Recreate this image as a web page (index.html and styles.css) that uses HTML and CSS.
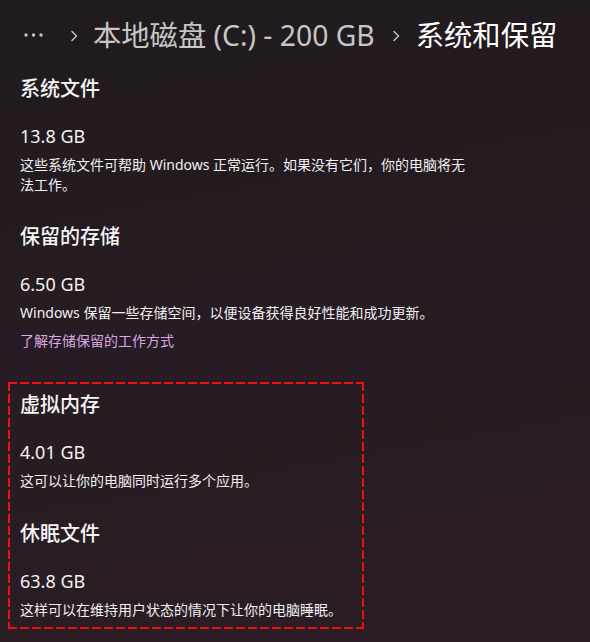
FILE: index.html
```html
<!DOCTYPE html>
<html lang="zh-CN">
<head>
<meta charset="utf-8">
<title>系统和保留</title>
<link rel="stylesheet" href="styles.css">
</head>
<body>
<div class="page">
  <nav class="crumbs">
    <span class="more">
      <svg width="19" height="6" viewBox="0 0 19 6"><circle cx="2" cy="3" r="1.7" fill="currentColor"/><circle cx="9.5" cy="3" r="1.7" fill="currentColor"/><circle cx="17" cy="3" r="1.7" fill="currentColor"/></svg>
    </span>
    <span class="chev">
      <svg width="10" height="14" viewBox="0 0 10 14"><path d="M3 2.5 L7.5 7 L3 11.5" fill="none" stroke="currentColor" stroke-width="1.6" stroke-linecap="round" stroke-linejoin="round"/></svg>
    </span>
    <span class="crumb">本地磁盘 (C:) - 200 GB</span>
    <span class="chev">
      <svg width="10" height="14" viewBox="0 0 10 14"><path d="M3 2.5 L7.5 7 L3 11.5" fill="none" stroke="currentColor" stroke-width="1.6" stroke-linecap="round" stroke-linejoin="round"/></svg>
    </span>
    <span class="crumb current">系统和保留</span>
  </nav>

  <section class="item">
    <h2 class="title">系统文件</h2>
    <div class="value">13.8 GB</div>
    <p class="desc wrap">这些系统文件可帮助 Windows 正常运行。如果没有它们，你的电脑将无法工作。</p>
  </section>

  <section class="item">
    <h2 class="title">保留的存储</h2>
    <div class="value">6.50 GB</div>
    <p class="desc">Windows 保留一些存储空间，以便设备获得良好性能和成功更新。</p>
    <a class="link" href="#">了解存储保留的工作方式</a>
  </section>

  <div class="highlight">
    <section class="item">
      <h2 class="title">虚拟内存</h2>
      <div class="value">4.01 GB</div>
      <p class="desc">这可以让你的电脑同时运行多个应用。</p>
    </section>
    <section class="item">
      <h2 class="title">休眠文件</h2>
      <div class="value">63.8 GB</div>
      <p class="desc">这样可以在维持用户状态的情况下让你的电脑睡眠。</p>
    </section>
  </div>
</div>
</body>
</html>
```

FILE: styles.css
```css
html, body {
  margin: 0;
  padding: 0;
  height: 100%;
}
body {
  background: linear-gradient(170deg, #201a1d 0%, #271c23 50%, #2b1d25 100%);
  color: #f3f3f3;
  font-family: "Segoe UI", "Noto Sans", "Noto Sans CJK SC", sans-serif;
  overflow: hidden;
}
.page {
  padding: 15px 20px 0 20px;
}
.crumbs {
  display: flex;
  align-items: center;
  height: 40px;
  font-size: 28.3px;
  line-height: 40px;
  color: #c6c6c6;
  white-space: nowrap;
}
.more {
  display: flex;
  align-items: center;
  margin-left: 4px;
  color: #c8c8c8;
}
.chev {
  display: flex;
  align-items: center;
  color: #bdbdbd;
  margin: 2px 14px 0 26px;
}
.crumb + .chev {
  margin-left: 16px;
  margin-right: 15px;
}
.crumb.current {
  color: #ffffff;
}
.item {
  margin-top: 28px;
}
.crumbs + .item {
  margin-top: 20px;
}
.highlight .item {
  margin-top: 29px;
}
.title {
  margin: 0;
  font-size: 20px;
  line-height: 28px;
  font-weight: 500;
  color: #f5f5f5;
}
.value {
  margin-top: 21px;
  font-size: 18px;
  line-height: 24px;
  color: #f3f3f3;
}
.desc {
  margin: 7px 0 0 0;
  font-size: 14px;
  line-height: 20px;
  color: #f0f0f0;
}
.desc.wrap {
  max-width: 450px;
}
.link {
  display: block;
  margin-top: 8px;
  font-size: 14px;
  line-height: 20px;
  color: #d9a7e2;
  text-decoration: none;
}
.highlight {
  margin: 31px 0 0 -12px;
  width: 334px;
  padding: 9px 10px 9px 12px;
  background:
    repeating-linear-gradient(90deg, #f01010 0 9px, transparent 9px 12px) top left / 100% 2px no-repeat,
    repeating-linear-gradient(90deg, #f01010 0 9px, transparent 9px 12px) bottom left / 100% 2px no-repeat,
    repeating-linear-gradient(180deg, #f01010 0 9px, transparent 9px 12px) top left / 2px 100% no-repeat,
    repeating-linear-gradient(180deg, #f01010 0 9px, transparent 9px 12px) top right / 2px 100% no-repeat;
}
.highlight .item:first-child {
  margin-top: 0;
}
```
